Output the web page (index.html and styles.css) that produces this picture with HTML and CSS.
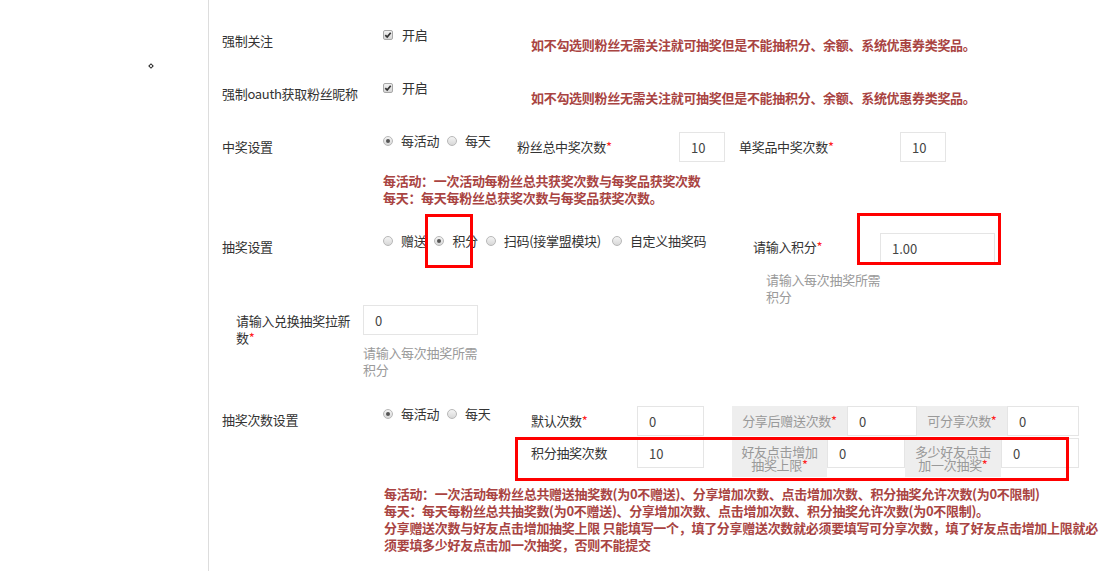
FILE: index.html
```html
<!DOCTYPE html>
<html lang="zh-CN">
<head>
  <meta charset="UTF-8">
  <title>抽奖设置</title>
  <link rel="stylesheet" href="styles.css">
</head>
<body>

  <div class="layout">
    <aside class="side"><span class="cursor-dot"></span></aside>

    <main class="form">

      <!-- 强制关注 -->
      <div class="row row-check">
        <div class="label">强制关注</div>
        <div class="check-wrap">
          <span class="check"><svg width="8" height="8" viewBox="0 0 8 8"><path d="M1.3 4.1 L3.2 6 L6.7 1.7" fill="none" stroke="#333" stroke-width="1.7"/></svg></span>开启
        </div>
        <div class="help-red check-help">如不勾选则粉丝无需关注就可抽奖但是不能抽积分、余额、系统优惠券类奖品。</div>
      </div>

      <!-- 强制oauth -->
      <div class="row row-check">
        <div class="label">强制oauth获取粉丝昵称</div>
        <div class="check-wrap">
          <span class="check"><svg width="8" height="8" viewBox="0 0 8 8"><path d="M1.3 4.1 L3.2 6 L6.7 1.7" fill="none" stroke="#333" stroke-width="1.7"/></svg></span>开启
        </div>
        <div class="help-red check-help">如不勾选则粉丝无需关注就可抽奖但是不能抽积分、余额、系统优惠券类奖品。</div>
      </div>

      <!-- 中奖设置 -->
      <div class="row">
        <div class="label">中奖设置</div>
        <div class="ctrl">
          <div class="prize-line">
            <div class="opts prize-opts">
              <label class="opt"><span class="radio on"></span>每活动</label>
              <label class="opt"><span class="radio"></span>每天</label>
            </div>
            <span class="field-label prize-label req">粉丝总中奖次数</span>
            <input class="ipt prize-ipt" value="10">
            <span class="field-label prize-label second req">单奖品中奖次数</span>
            <input class="ipt prize-ipt" value="10">
          </div>
          <div class="help-red prize-help">每活动：一次活动每粉丝总共获奖次数与每奖品获奖次数<br>每天：每天每粉丝总获奖次数与每奖品获奖次数。</div>
        </div>
      </div>

      <!-- 抽奖设置 -->
      <div class="row row-draw">
        <div class="label">抽奖设置</div>
        <div class="opts draw-opts">
          <label class="opt"><span class="radio"></span>赠送</label>
          <label class="opt"><span class="radio on"></span>积分</label>
          <label class="opt"><span class="radio"></span>扫码(接掌盟模块)</label>
          <label class="opt"><span class="radio"></span>自定义抽奖码</label>
        </div>
        <div class="points">
          <div class="points-line">
            <span class="points-label req">请输入积分</span>
            <input class="ipt points-ipt" value="1.00">
          </div>
          <div class="help-gray points-help">请输入每次抽奖所需积分</div>
        </div>
      </div>

      <!-- 兑换抽奖拉新数 -->
      <div class="row row-invite">
        <div class="invite-label req">请输入兑换抽奖拉新数</div>
        <div>
          <input class="ipt invite-ipt" value="0">
          <div class="help-gray invite-help">请输入每次抽奖所需积分</div>
        </div>
      </div>

      <!-- 抽奖次数设置 -->
      <div class="row row-count">
        <div class="label">抽奖次数设置</div>
        <div class="ctrl">
          <div class="count-line">
            <div class="opts count-opts">
              <label class="opt"><span class="radio on"></span>每活动</label>
              <label class="opt"><span class="radio"></span>每天</label>
            </div>
            <div class="count-grid">
              <div class="field">
                <span class="field-label count-label req">默认次数</span>
                <input class="ipt count-ipt" value="0">
              </div>
              <div class="group">
                <span class="addon a1 req">分享后赠送次数</span>
                <input class="ipt g1" value="0">
                <span class="addon a2 req">可分享次数</span>
                <input class="ipt g2" value="0">
              </div>
              <div class="field">
                <span class="field-label count-label">积分抽奖次数</span>
                <input class="ipt count-ipt" value="10">
              </div>
              <div class="group">
                <span class="addon two a3 req">好友点击增加抽奖上限</span>
                <input class="ipt g3" value="0">
                <span class="addon two a4 req">多少好友点击加一次抽奖</span>
                <input class="ipt g4" value="0">
              </div>
            </div>
          </div>
          <div class="help-red count-help">每活动：一次活动每粉丝总共赠送抽奖数(为0不赠送)、分享增加次数、点击增加次数、积分抽奖允许次数(为0不限制)<br>每天：每天每粉丝总共抽奖数(为0不赠送)、分享增加次数、点击增加次数、积分抽奖允许次数(为0不限制)。<br>分享赠送次数与好友点击增加抽奖上限 只能填写一个，填了分享赠送次数就必须要填写可分享次数，填了好友点击增加上限就必须要填多少好友点击加一次抽奖，否则不能提交</div>
        </div>
      </div>

    </main>
  </div>

  <!-- red annotation boxes -->
  <div class="mark mark-radio"></div>
  <div class="mark mark-points"></div>
  <div class="mark mark-count"></div>

</body>
</html>
```

FILE: styles.css
```css
* {
  box-sizing: border-box;
}
body {
  margin: 0;
  font-family: "Noto Sans CJK SC", "Microsoft YaHei", sans-serif;
  font-size: 13px;
  letter-spacing: -0.3px;
  color: #333;
  background: #fff;
  position: relative;
}
.req::after {
  content: "*";
  color: #f22;
}
.layout {
  display: flex;
  min-height: 571px;
}
.side {
  width: 209px;
  flex-shrink: 0;
  border-right: 1px solid #ddd;
  padding: 64px 0 0 149px;
}
.cursor-dot {
  display: block;
  width: 4px;
  height: 4px;
  border: 1px solid #222;
  transform: rotate(45deg);
}
.form {
  flex: 1;
  padding: 26px 0 0 13px;
}
.row {
  display: flex;
  align-items: flex-start;
}
.label {
  width: 161px;
  flex-shrink: 0;
  padding-top: 6px;
  line-height: 17px;
}
.ctrl {
  display: flex;
  flex-direction: column;
}

/* checkbox rows */
.row-check {
  height: 53px;
}
.check-wrap {
  width: 148px;
  display: flex;
  align-items: center;
  line-height: 17px;
}
.check {
  width: 10px;
  height: 10px;
  margin: 0 9px 0 0;
  border: 1px solid #a8a8a8;
  border-radius: 2px;
  background: linear-gradient(#f2f2f2, #d6d6d6);
  display: flex;
  align-items: center;
  justify-content: center;
}
.help-red {
  color: #a94442;
  font-weight: bold;
  line-height: 17px;
}
.check-help {
  padding-top: 10px;
}
.help-gray {
  color: #9a9a9a;
  line-height: 17px;
}

/* radios */
.opts {
  display: flex;
  align-items: center;
  line-height: 17px;
}
.opt {
  display: flex;
  align-items: center;
  margin-right: 8px;
}
.radio {
  width: 10px;
  height: 10px;
  border-radius: 50%;
  border: 1px solid #b8b8b8;
  background: linear-gradient(#f4f4f4, #d8d8d8);
  margin-right: 8px;
  display: flex;
  align-items: center;
  justify-content: center;
}
.radio.on::after {
  content: "";
  width: 4px;
  height: 4px;
  border-radius: 50%;
  background: #555;
}

/* inputs */
.ipt {
  height: 30px;
  border: 1px solid #e5e5e5;
  padding: 0 11px;
  font-family: inherit;
  font-size: 13px;
  color: #444;
  outline: none;
  background: #fff;
  margin: 0;
}
.field-label {
  line-height: 30px;
  flex-shrink: 0;
}

/* 中奖设置 */
.prize-line {
  display: flex;
  align-items: flex-start;
}
.prize-opts {
  width: 134px;
}
.prize-label {
  width: 162px;
}
.prize-label.second {
  width: 161px;
  margin-left: 14px;
}
.prize-ipt {
  width: 46px;
}
.prize-help {
  margin-top: 10px;
}

/* 抽奖设置 */
.row-draw {
  margin-top: 26px;
}
.draw-opts {
  width: 370px;
}
.draw-opts .opt:nth-child(3) {
  margin-right: 11px;
}
.points {
  margin-top: 1px;
}
.points-line {
  display: flex;
  align-items: flex-start;
}
.points-label {
  width: 127px;
  padding-top: 5px;
  line-height: 17px;
}
.points-ipt {
  width: 115px;
}
.points-help {
  margin: 8px 0 0 13px;
  width: 120px;
}

/* 兑换抽奖拉新数 */
.row-invite {
  margin-left: 14px;
}
.invite-label {
  width: 127px;
  padding: 7px 7px 0 0;
  line-height: 17px;
}
.invite-ipt {
  width: 115px;
}
.invite-help {
  margin-top: 9px;
  width: 120px;
}

/* 抽奖次数设置 */
.row-count {
  margin-top: 27px;
}
.count-line {
  display: flex;
  align-items: flex-start;
}
.count-opts {
  width: 148px;
}
.count-grid {
  display: grid;
  grid-template-columns: 173px 347px;
  column-gap: 28px;
  row-gap: 2px;
  padding-top: 1px;
}
.field {
  display: flex;
}
.count-label {
  width: 106px;
}
.count-ipt {
  width: 67px;
}
.group {
  display: flex;
  align-items: flex-start;
}
.addon {
  background: #eee;
  color: #999;
  text-align: center;
  height: 30px;
  line-height: 30px;
  flex-shrink: 0;
}
.addon.two {
  height: 39px;
  line-height: 13px;
  padding: 7px 8px 0;
}
.a1 { width: 115px; }
.g1 { width: 70px; }
.a2 { width: 90px; }
.g2 { width: 72px; }
.a3 { width: 95px; }
.g3 { width: 78px; }
.a4 { width: 96px; }
.g4 { width: 78px; }
.count-help {
  margin: 8px 0 0 1px;
  width: 716px;
}

/* red annotation boxes drawn over the form */
.mark {
  position: absolute;
  border: 3px solid #f00;
}
.mark-radio {
  left: 425px;
  top: 214px;
  width: 48px;
  height: 54px;
}
.mark-points {
  left: 857px;
  top: 213px;
  width: 144px;
  height: 52px;
}
.mark-count {
  left: 515px;
  top: 437px;
  width: 554px;
  height: 44px;
}
```
